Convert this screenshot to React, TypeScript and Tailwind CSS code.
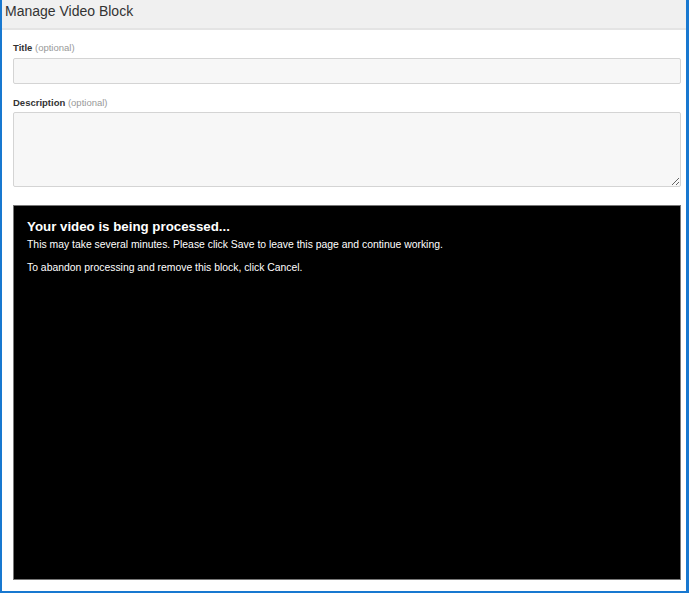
export default function App() {
  return (
    <div
      className="flex h-[593px] w-[689px] flex-col border-b-2 border-l-2 border-r-[3px] border-[#1878d0] bg-white"
      style={{ fontFamily: '"Liberation Sans", Arial, sans-serif' }}
    >
      <div className="h-[30px] shrink-0 border-b-2 border-[#e4e4e4] bg-[#f0f0f0] pl-[3px] pt-[2px] text-[14px] leading-[18px] text-[#333]">
        Manage Video Block
      </div>

      <div className="flex flex-1 flex-col pl-[11px] pr-[5px] pb-[11px]">
        <label className="mt-[12px] block text-[9.5px] leading-[11px] font-bold text-[#333]">
          Title <span className="font-normal text-[#999]">(optional)</span>
        </label>
        <input
          type="text"
          className="mt-[5px] block h-[26px] w-full rounded-[2px] border border-[#d4d4d4] bg-[#f7f7f7] outline-none"
        />

        <label className="mt-[13px] block text-[9.5px] leading-[11px] font-bold text-[#333]">
          Description <span className="font-normal text-[#999]">(optional)</span>
        </label>
        <textarea className="mt-[4px] block h-[75px] w-full rounded-[2px] border border-[#d4d4d4] bg-[#f7f7f7] outline-none" />

        <div className="mt-[18px] flex-1 border border-[#777] bg-black px-[13px] pt-[13px] text-white">
          <h2 className="text-[13.3px] leading-[16px] font-bold">Your video is being processed...</h2>
          <p className="mt-[3px] text-[10.4px] leading-[14px]">
            This may take several minutes. Please click Save to leave this page and continue working.
          </p>
          <p className="mt-[9px] text-[10.4px] leading-[14px]">
            To abandon processing and remove this block, click Cancel.
          </p>
        </div>
      </div>
    </div>
  );
}
